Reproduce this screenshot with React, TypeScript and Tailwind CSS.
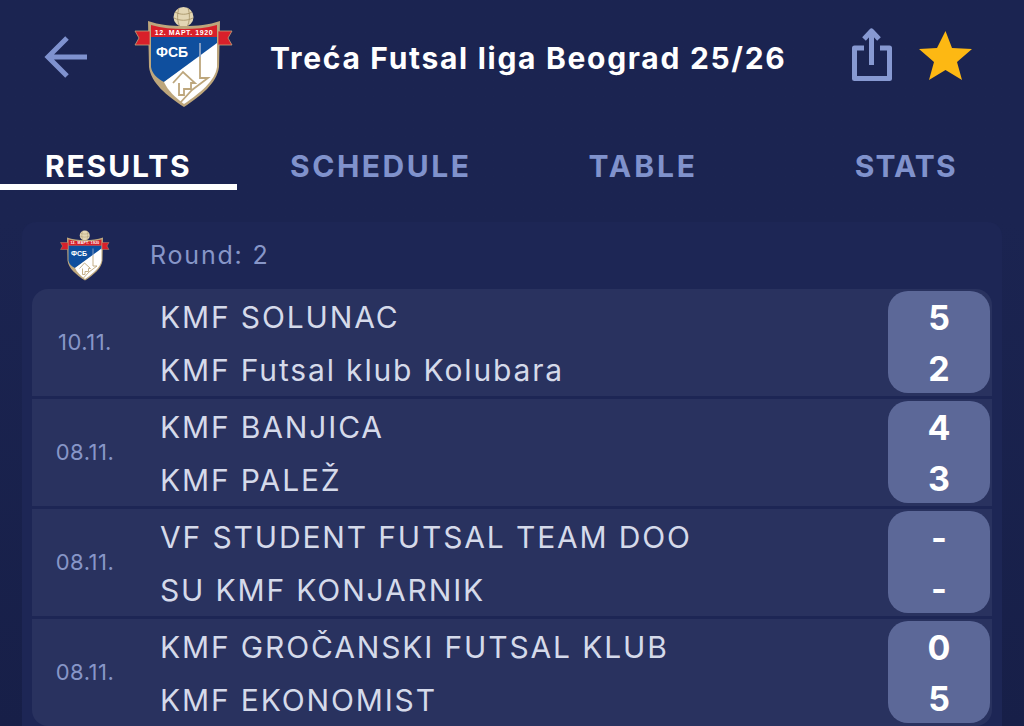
const matches = [
  { date: "10.11.", home: "KMF SOLUNAC", away: "KMF Futsal klub Kolubara", homeScore: "5", awayScore: "2" },
  { date: "08.11.", home: "KMF BANJICA", away: "KMF PALEŽ", homeScore: "4", awayScore: "3" },
  { date: "08.11.", home: "VF STUDENT FUTSAL TEAM DOO", away: "SU KMF KONJARNIK", homeScore: "-", awayScore: "-" },
  { date: "08.11.", home: "KMF GROČANSKI FUTSAL KLUB", away: "KMF EKONOMIST", homeScore: "0", awayScore: "5" },
];

const tabs = [
  { label: "RESULTS", spacing: "tracking-[1.9px]" },
  { label: "SCHEDULE", spacing: "tracking-[2.5px]" },
  { label: "TABLE", spacing: "tracking-[2.9px]" },
  { label: "STATS", spacing: "tracking-[1.1px]" },
];

function Crest({ className }: { className: string }) {
  return (
    <svg viewBox="0 0 108 108" className={className}>
      {/* ball */}
      <circle cx="53.500" cy="13" r="10" fill="#e3d6b4" />
      <path d="M45 8c5 3 12 3 17 0M44 14c6 3 13 3 19 0M49 4c-2 6-2 13 1 19M58 4c2 6 2 13-1 19" stroke="#a8956a" strokeWidth="0.9" fill="none" />
      {/* shield */}
      <path d="M18 17c11 4 23 5 36 5s25-1 36-5l-1 46c-2 16-18 29-35 40C37 92 21 79 19 63z" fill="#bda67c" />
      <path d="M21 33h66v8L34 78c-8-4-12-9-13-15z" fill="#0f4f9e" />
      <path d="M87 39v24c-2 14-17 26-33 37-8-6-16-13-20-22z" fill="#fff" />
      {/* ribbon */}
      <path d="M5 27h15v14H5l4-7z" fill="#d8202a" stroke="#bda67c" strokeWidth="0.8" />
      <path d="M102 27H88v14h14l-4-7z" fill="#d8202a" stroke="#bda67c" strokeWidth="0.8" />
      <path d="M21 21c11 3 22 4 33 4s22-1 33-4v12H21z" fill="#d8202a" />
      {/* house, tower and wall */}
      <path d="M43 79l10-11 12 11h-4v6h-7v6h-5v-12" fill="none" stroke="#bda67c" strokeWidth="1.8" />
      <path d="M70 53v21h8L62 86 50 99" fill="none" stroke="#bda67c" strokeWidth="1.800" />
      <path d="M70 39v14" stroke="#8fa3c4" strokeWidth="1.800" />
      <text x="54" y="30.500" textAnchor="middle" fontSize="7" fontWeight="700" fill="#fff" fontFamily="Liberation Sans, sans-serif" letterSpacing="0.6">12. МАРТ. 1920</text>
      <text x="42" y="53" textAnchor="middle" fontSize="14" fontWeight="700" fill="#fff" fontFamily="Liberation Sans, sans-serif">ФСБ</text>
    </svg>
  );
}

export default function App() {
  return (
    <div className="w-[1024px] h-[726px] overflow-hidden bg-gradient-to-b from-[#1b2451] from-30% to-[#171f48] font-['Inter',sans-serif]">
      <header className="flex items-center h-[116px]">
        <svg viewBox="0 0 44 44" className="w-[44px] h-[44px] ml-[44px] -mt-[2px]" fill="none" stroke="#7f92cf" strokeWidth="5">
          <path d="M43 22H5M23 3 4 22l19 19" />
        </svg>
        <Crest className="w-[108px] h-[108px] ml-[42px]" />
        <h1 className="ml-[32px] w-[580px] text-[30px] font-bold tracking-[1.7px] text-white whitespace-nowrap">Treća Futsal liga Beograd 25/26</h1>
        <svg viewBox="0 0 44 60" className="w-[44px] h-[60px]" fill="none" stroke="#8799d2" strokeWidth="5" strokeLinejoin="round">
          <path d="M14 20H4.500v30.500h35V20H30" />
          <path d="M21.500 37V3M14 11l7.500-8L29 11" />
        </svg>
        <svg viewBox="0 0 54 54" className="w-[54px] h-[54px] ml-[25px]">
          <path d="M26.500 0 33 17l20 1-15 13 5 18-16.500-10L10 49l5-18L0 18l18-1z" fill="#fdb813" />
        </svg>
      </header>

      <nav className="grid grid-cols-4 gap-[26px] h-[74px] pt-[32px]">
        {tabs.map((tab, i) => (
          <span key={tab.label} className={`flex justify-center items-center h-[42px] text-[30px] font-bold ${tab.spacing} ${i === 0 ? "text-white border-b-[6px] border-white" : "text-[#8092cc] pb-[6px]"}`}>
            {tab.label}
          </span>
        ))}
      </nav>

      <main className="mx-[22px] mt-[32px] bg-[#1d2655] rounded-t-[14px] px-[10px]">
        <div className="flex items-center h-[67px]">
          <Crest className="w-[54px] h-[54px] ml-[26px]" />
          <span className="ml-[38px] text-[25px] tracking-[1.8px] text-[#8796c8]">Round: 2</span>
        </div>
        <div className="flex flex-col gap-[3px]">
          {matches.map((m, i) => (
            <div
              key={i}
              className={`flex h-[107px] bg-[#29325f] ${i === 0 ? "rounded-t-[16px]" : ""} ${i === matches.length - 1 ? "rounded-b-[16px]" : ""}`}
            >
              <span className="w-[106px] self-center text-center text-[22px] tracking-[0.5px] text-[#8796c8]">{m.date}</span>
              <div className="ml-[22px] self-center pt-[2px] flex-1 flex flex-col gap-[18px] text-[30px] leading-[35px] tracking-[1.85px] text-[#d5daea] whitespace-nowrap">
                <span>{m.home}</span>
                <span>{m.away}</span>
              </div>
              <div className="mt-[2px] mr-[2px] w-[102px] h-[102px] rounded-[20px] bg-[#5c6898] pt-[2px] flex flex-col items-center justify-center gap-[16px] text-[34px] leading-[35px] font-bold text-white">
                <span>{m.homeScore}</span>
                <span>{m.awayScore}</span>
              </div>
            </div>
          ))}
        </div>
      </main>
    </div>
  );
}
